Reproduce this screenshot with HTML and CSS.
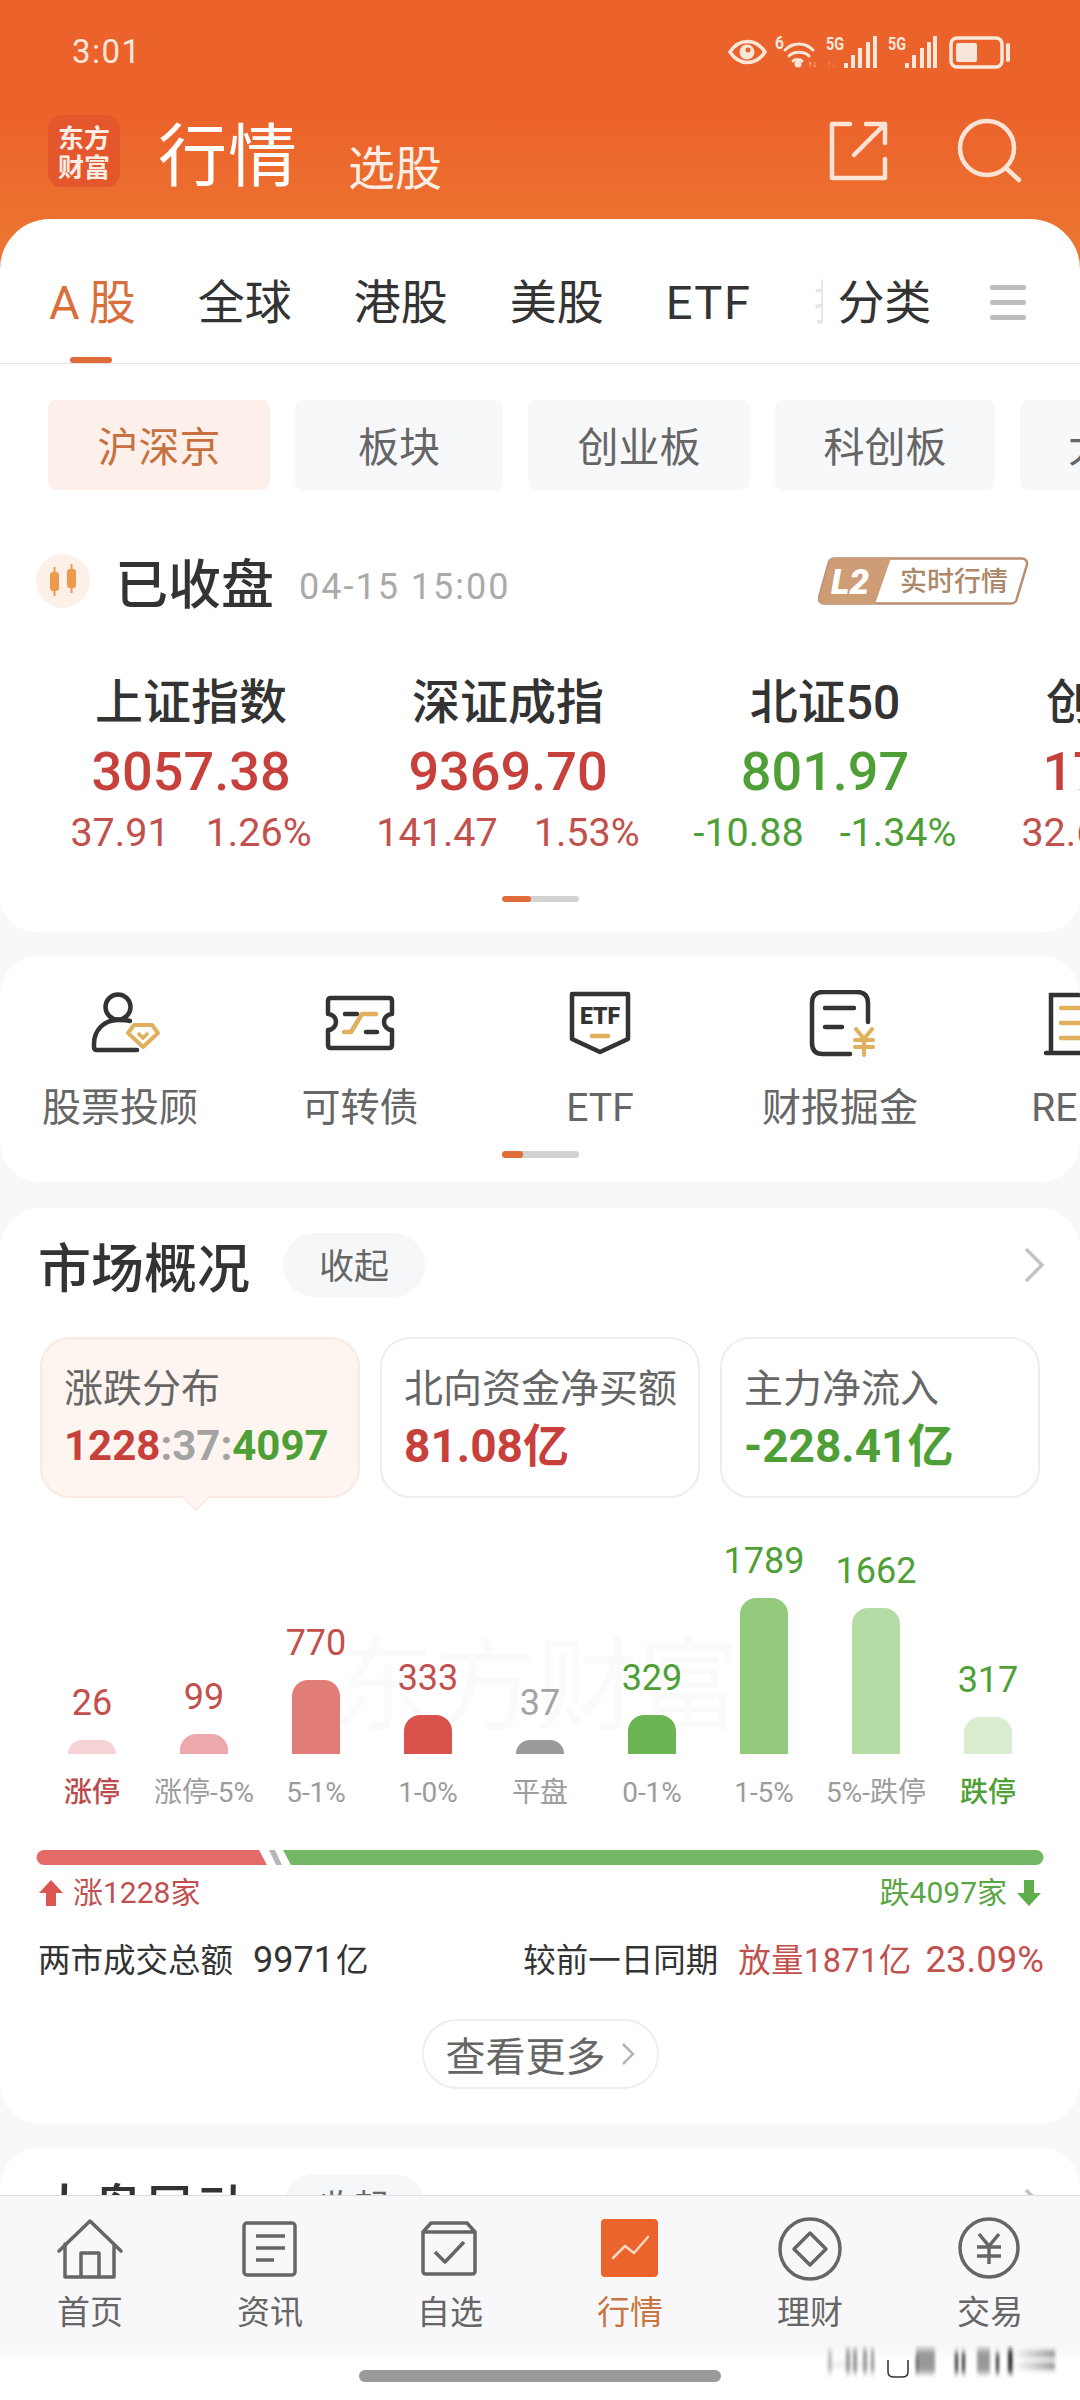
FILE: index.html
```html
<!DOCTYPE html>
<html lang="zh-CN">
<head>
<meta charset="utf-8">
<title>行情</title>
<link rel="stylesheet" href="styles.css">
</head>
<body>
<div class="app">
  <header class="header">
    <div class="status">
      <span class="time">3:01</span>
      <svg class="status-icons" viewBox="720 30 300 40" width="300" height="40">
        <g fill="none" stroke="#FBE7DA" stroke-width="3.5" stroke-linecap="round">
          <path d="M730 52c9-14 26-14 35 0c-9 14-26 14-35 0z"/>
          <path d="M785 50c8-8 20-8 28 0M789 56c5-5 15-5 20 0M793 61c2-2 7-2 9 0" stroke-width="3"/>
          <rect x="951" y="38" width="51" height="29" rx="6"/>
          <path d="M1008 45v15" stroke-width="4"/>
        </g>
        <circle cx="747" cy="52" r="7.5" fill="#FBE7DA"/>
        <circle cx="748" cy="50" r="2.5" fill="#EB622B"/>
        <circle cx="798" cy="64" r="3.5" fill="#FBE7DA"/>
        <rect x="956" y="43" width="21" height="19" rx="2" fill="#FBE7DA"/>
        <g fill="#FBE7DA">
          <rect x="844" y="63" width="4" height="5"/><rect x="851" y="55" width="4" height="13"/><rect x="858" y="48" width="4" height="20"/><rect x="866" y="42" width="4" height="26"/><rect x="873" y="36" width="4" height="32"/>
          <rect x="905" y="63" width="4" height="5"/><rect x="912" y="55" width="4" height="13"/><rect x="920" y="48" width="4" height="20"/><rect x="927" y="42" width="4" height="26"/><rect x="933" y="36" width="4" height="32"/>
          <text class="st" x="775" y="49" textLength="9" lengthAdjust="spacingAndGlyphs">6</text>
          <text class="st" x="826" y="50" textLength="18" lengthAdjust="spacingAndGlyphs">5G</text>
          <text class="st" x="888" y="50" textLength="18" lengthAdjust="spacingAndGlyphs">5G</text>
          <text class="st-sm" x="808" y="67">↑↓</text>
        </g>
        <text class="st-sm dim" x="827" y="67">↑↓</text>
      </svg>
    </div>
    <div class="titlebar">
      <div class="logo"><span>东方</span><span>财富</span></div>
      <h1 class="page-title">行情</h1>
      <span class="page-sub">选股</span>
      <svg class="title-icons" viewBox="825 115 200 72" width="200" height="72">
        <g fill="none" stroke="#FBE3D5" stroke-width="4.5" stroke-linecap="round" stroke-linejoin="round">
          <path d="M850 124h-18v54h53v-19"/>
          <path d="M854 155l31-31M866 124h19v19"/>
          <circle cx="987" cy="148" r="27"/>
          <path d="M1006 168l13 12"/>
        </g>
      </svg>
    </div>
  </header>

  <section class="panel">
    <nav class="tabs">
      <span class="tab active"><span class="tab-a">A</span>股</span>
      <span class="tab">全球</span>
      <span class="tab">港股</span>
      <span class="tab">美股</span>
      <span class="tab tab-etf">ETF</span>
      <span class="tab tab-ghost">换</span>
      <span class="tab tab-last">分类</span>
      <span class="menu"><i></i><i></i><i></i></span>
    </nav>
    <div class="pills">
      <span class="pill pill-on w222">沪深京</span>
      <span class="pill w208">板块</span>
      <span class="pill w222">创业板</span>
      <span class="pill w220">科创板</span>
      <span class="pill pill-cut">大盘</span>
    </div>
    <div class="closed">
      <span class="closed-ico">
        <svg viewBox="0 0 54 54" width="54" height="54"><g fill="#EE9A4D"><rect x="14" y="18" width="9" height="19" rx="3"/><rect x="31" y="15" width="9" height="19" rx="3"/><rect x="17.500" y="13" width="2" height="29"/><rect x="34.500" y="10" width="2" height="29"/></g></svg>
      </span>
      <span class="closed-title">已收盘</span>
      <span class="closed-date">04-15 15:00</span>
      <svg class="l2" viewBox="0 0 212 48" width="212" height="48">
        <path d="M16 1.500H204a5 5 0 0 1 5 6L199 41a6 6 0 0 1-6 5.500H6a5 5 0 0 1-5-6L11 5a6 6 0 0 1 5-3.500z" fill="#fff" stroke="#B98F70" stroke-width="2.500"/>
        <path d="M16 1H73L57 47H6a5 5 0 0 1-5-6L11 5a6 6 0 0 1 5-4z" fill="#CE9D76"/>
        <text class="l2-big" x="13" y="37">L2</text>
        <text class="l2-txt" x="82" y="34">实时行情</text>
      </svg>
    </div>
    <div class="indices">
      <div class="idx">
        <div class="idx-name">上证指数</div>
        <div class="idx-val up">3057.38</div>
        <div class="idx-chg up-l"><span>37.91</span><span>1.26%</span></div>
      </div>
      <div class="idx">
        <div class="idx-name">深证成指</div>
        <div class="idx-val up">9369.70</div>
        <div class="idx-chg up-l"><span>141.47</span><span>1.53%</span></div>
      </div>
      <div class="idx">
        <div class="idx-name">北证50</div>
        <div class="idx-val down">801.97</div>
        <div class="idx-chg down"><span>-10.88</span><span>-1.34%</span></div>
      </div>
      <div class="idx">
        <div class="idx-name">创业板指</div>
        <div class="idx-val up">1756.25</div>
        <div class="idx-chg up-l"><span>32.61</span><span>1.89%</span></div>
      </div>
    </div>
    <div class="scroller"><i class="s29"></i></div>
  </section>

  <section class="card card-tools">
    <div class="tools">
      <div class="tool">
        <svg class="tool-ico" viewBox="60 990 120 70" width="120" height="70">
          <g fill="none" stroke="#333" stroke-width="4.500" stroke-linecap="round" stroke-linejoin="round">
            <circle cx="118" cy="1007" r="12.500"/>
            <path d="M130 1021c-4-1-8-1-12-1c-14 0-24 10-24 24v3q0 3 3 3h40"/>
          </g>
          <path d="M134 1025h18l6 8l-15 14l-15-14z" fill="#fff" stroke="#E1B05C" stroke-width="4" stroke-linejoin="round"/>
          <path d="M138 1033l5 5l5-5" fill="none" stroke="#E1B05C" stroke-width="3.500"/>
        </svg>
        <span class="tool-label">股票投顾</span>
      </div>
      <div class="tool">
        <svg class="tool-ico" viewBox="300 990 120 70" width="120" height="70">
          <path d="M331 998h58q3 0 3 3v13a8 8 0 0 0 0 16v15q0 3-3 3h-58q-3 0-3-3v-15a8 8 0 0 0 0-16v-13q0-3 3-3z" fill="none" stroke="#333" stroke-width="4.500" stroke-linejoin="round"/>
          <path d="M345 1014h12M366 1032h11" stroke="#333" stroke-width="4.500" stroke-linecap="round"/>
          <path d="M344 1032h7l11-18h14" fill="none" stroke="#E1B05C" stroke-width="4.500" stroke-linecap="round" stroke-linejoin="round"/>
        </svg>
        <span class="tool-label">可转债</span>
      </div>
      <div class="tool">
        <svg class="tool-ico" viewBox="540 990 120 70" width="120" height="70">
          <path d="M572 994h56v45l-28 13l-28-13z" fill="none" stroke="#333" stroke-width="4.500" stroke-linejoin="round"/>
          <text class="etf-glyph" x="600" y="1024">ETF</text>
          <path d="M592 1036h16" stroke="#E1B05C" stroke-width="4.500" stroke-linecap="round"/>
        </svg>
        <span class="tool-label">ETF</span>
      </div>
      <div class="tool">
        <svg class="tool-ico" viewBox="780 990 120 70" width="120" height="70">
          <path d="M868 1022v-19q0-11-11-11h-34q-11 0-11 11v40q0 11 11 11h27M825 1008h29M825 1027h17" fill="none" stroke="#333" stroke-width="4.500" stroke-linecap="round"/>
          <path d="M856 1029l8 10l8-10M855 1040h18M855 1047h18M864 1039v16" fill="none" stroke="#E1B05C" stroke-width="4" stroke-linecap="round" stroke-linejoin="round"/>
        </svg>
        <span class="tool-label">财报掘金</span>
      </div>
      <div class="tool">
        <svg class="tool-ico" viewBox="1020 990 120 70" width="120" height="70">
          <path d="M1110 995h-59v57M1046 1053h70" fill="none" stroke="#333" stroke-width="4.500" stroke-linecap="round"/>
          <path d="M1061 1008h50M1061 1023h50M1061 1038h50" stroke="#E1B05C" stroke-width="4.500" stroke-linecap="round"/>
        </svg>
        <span class="tool-label">REITs</span>
      </div>
    </div>
    <div class="scroller tools-scroller"><i class="s21"></i></div>
  </section>

  <section class="card card-market">
    <div class="sec-head">
      <h2 class="sec-title">市场概况</h2>
      <span class="fold">收起</span>
      <svg class="chev" viewBox="0 0 22 36" width="22" height="36"><path d="M3 2l16 16L3 34" fill="none" stroke="#C4C4C4" stroke-width="3.500"/></svg>
    </div>
    <div class="stats">
      <div class="stat stat-on">
        <div class="stat-label">涨跌分布</div>
        <div class="stat-val"><span class="up">1228</span><span class="flat">:37:</span><span class="down">4097</span></div>
      </div>
      <div class="stat">
        <div class="stat-label">北向资金净买额</div>
        <div class="stat-val stat-big up">81.08亿</div>
      </div>
      <div class="stat">
        <div class="stat-label">主力净流入</div>
        <div class="stat-val stat-big down">-228.41亿</div>
      </div>
    </div>
    <div class="chart">
      <div class="watermark">东方财富</div>
      <div class="col"><span class="num up-l">26</span><i class="bar c1" style="height:14px"></i></div>
      <div class="col"><span class="num up-l">99</span><i class="bar c2" style="height:20px"></i></div>
      <div class="col"><span class="num up-l">770</span><i class="bar c3" style="height:74px"></i></div>
      <div class="col"><span class="num up-l">333</span><i class="bar c4" style="height:39px"></i></div>
      <div class="col"><span class="num flat">37</span><i class="bar c5" style="height:14px"></i></div>
      <div class="col"><span class="num down">329</span><i class="bar c6" style="height:39px"></i></div>
      <div class="col"><span class="num down">1789</span><i class="bar c7" style="height:156px"></i></div>
      <div class="col"><span class="num down">1662</span><i class="bar c8" style="height:146px"></i></div>
      <div class="col"><span class="num down">317</span><i class="bar c9" style="height:37px"></i></div>
    </div>
    <div class="axis">
      <span class="ax-up">涨停</span><span>涨停-5%</span><span>5-1%</span><span>1-0%</span><span>平盘</span><span>0-1%</span><span>1-5%</span><span>5%-跌停</span><span class="ax-down">跌停</span>
    </div>
    <svg class="ratio" viewBox="36 0 1008 15" width="1008" height="15">
      <path d="M44 0H259L267 15H44A7.500 7.500 0 0 1 44 0z" fill="#E46B68"/>
      <path d="M269 0H275L282 15H276z" fill="#B8B8B8"/>
      <path d="M283 0H1036A7.500 7.500 0 0 1 1036 15H291z" fill="#74B866"/>
    </svg>
    <div class="ratio-text">
      <span class="rise"><svg viewBox="0 0 26 28" width="26" height="28"><path d="M13 1L25 14H18V27H8V14H1z" fill="#DB5650"/></svg>涨1228家</span>
      <span class="fall">跌4097家<svg viewBox="0 0 26 28" width="26" height="28"><path d="M13 27L25 14H18V1H8V14H1z" fill="#5FAE4B"/></svg></span>
    </div>
    <div class="turnover">
      <span>两市成交总额<b class="tv-num">9971</b><b class="tv-unit">亿</b></span>
      <span>较前一日同期<b class="tv-up tv-vol">放量1871亿</b><b class="tv-up tv-pct">23.09%</b></span>
    </div>
    <div class="more-wrap">
      <span class="more">查看更多<svg viewBox="0 0 14 24" width="14" height="24"><path d="M2 2l10 10L2 22" fill="none" stroke="#B5B5B5" stroke-width="2.500"/></svg></span>
    </div>
  </section>

  <section class="card card-next">
    <div class="sec-head">
      <h2 class="sec-title">大盘异动</h2>
      <span class="fold">收起</span>
      <svg class="chev" viewBox="0 0 22 36" width="22" height="36"><path d="M3 2l16 16L3 34" fill="none" stroke="#C4C4C4" stroke-width="3.500"/></svg>
    </div>
  </section>

  <footer class="tabbar">
    <div class="tabbar-row">
      <div class="nav-item">
        <svg viewBox="50 2215 80 70" width="80" height="70"><path d="M59 2251l31-30l31 30M65 2244v33h49v-33M81 2277v-24h18v24" fill="none" stroke="#666" stroke-width="3.500" stroke-linecap="round" stroke-linejoin="round"/></svg>
        <span>首页</span>
      </div>
      <div class="nav-item">
        <svg viewBox="230 2215 80 70" width="80" height="70"><rect x="244" y="2223" width="51" height="52" rx="3" fill="none" stroke="#666" stroke-width="3.500"/><path d="M256 2236h29M256 2248h29M256 2260h18" stroke="#666" stroke-width="3.500"/></svg>
        <span>资讯</span>
      </div>
      <div class="nav-item">
        <svg viewBox="410 2215 80 70" width="80" height="70"><path d="M423 2232l8-9h36l8 9v39q0 3-3 3h-46q-3 0-3-3zM423 2232h52M435 2252l10 10l19-20" fill="none" stroke="#666" stroke-width="3.500" stroke-linejoin="round"/></svg>
        <span>自选</span>
      </div>
      <div class="nav-item nav-on">
        <svg viewBox="590 2215 80 70" width="80" height="70"><rect x="601" y="2219" width="57" height="58" rx="4" fill="#EB642B"/><path d="M613 2258l12-12l9 7l14-16" fill="none" stroke="#FBD9C3" stroke-width="2.500" stroke-linecap="round" stroke-linejoin="round"/></svg>
        <span>行情</span>
      </div>
      <div class="nav-item">
        <svg viewBox="770 2215 80 70" width="80" height="70"><circle cx="810" cy="2249" r="30" fill="none" stroke="#666" stroke-width="3.500"/><path d="M810 2233l16 16l-16 16l-16-16z" fill="none" stroke="#666" stroke-width="3.500" stroke-linejoin="round"/></svg>
        <span>理财</span>
      </div>
      <div class="nav-item">
        <svg viewBox="950 2215 80 70" width="80" height="70"><circle cx="989" cy="2248" r="29" fill="none" stroke="#666" stroke-width="3.500"/><path d="M979 2234l10 12l10-12M977 2247h24M977 2256h24M989 2246v18" fill="none" stroke="#666" stroke-width="3.500"/></svg>
        <span>交易</span>
      </div>
    </div>
    <div class="home-pill"></div>
    <svg class="smudge" viewBox="825 2345 232 34" width="232" height="34">
      <defs>
        <filter id="soft" x="-5%" y="-20%" width="110%" height="140%"><feGaussianBlur stdDeviation="1.600 3"/></filter>
        <linearGradient id="fadeBar"><stop offset="0" stop-color="#fff"/><stop offset="1" stop-color="#333"/></linearGradient>
      </defs>
      <g filter="url(#soft)">
        <path d="M826 2365h50" stroke="#bbb" stroke-width="1.500"/>
        <g fill="#999">
          <rect x="828" y="2350" width="4" height="23" opacity=".6"/><rect x="846" y="2349" width="4" height="24"/><rect x="853" y="2349" width="4" height="24"/><rect x="863" y="2349" width="4" height="24"/><rect x="871" y="2349" width="3" height="24"/>
          <rect x="916" y="2349" width="19" height="24"/>
          <rect x="977" y="2349" width="13" height="24"/>
        </g>
        <g fill="#333">
          <rect x="955" y="2352" width="3" height="21"/><rect x="962" y="2352" width="3" height="21"/><rect x="996" y="2353" width="3" height="20"/><rect x="1008" y="2349" width="5" height="24"/><rect x="916" y="2355" width="2" height="18"/>
        </g>
        <path d="M1013 2354h42M1013 2366h42" stroke="url(#fadeBar)" stroke-width="4"/>
      </g>
      <path d="M888 2360v12q0 5 6 5h8q6 0 6-5v-12" fill="none" stroke="#333" stroke-width="1.500"/>
    </svg>
  </footer>
</div>
</body>
</html>
```
FILE: styles.css
```css
* { box-sizing: border-box; margin: 0; padding: 0; }
html, body { width: 1080px; height: 2400px; overflow: hidden; }
body {
  font-family: Roboto, "Noto Sans CJK SC", sans-serif;
  color: #333;
  background: #f7f8fa;
}
.app {
  position: relative;
  width: 1080px;
  height: 2400px;
  overflow: hidden;
  background: linear-gradient(180deg, #eb622b 0, #eb622b 110px, #ed7b33 290px, #ed7b33 300px) no-repeat;
  background-size: 100% 300px;
  background-color: #f7f8fa;
}
i { display: block; font-style: normal; }

/* header */
.header { height: 219px; color: #fff; }
.status { height: 100px; display: flex; align-items: center; justify-content: space-between; padding: 2px 60px 0 72px; }
.time { font-size: 33px; color: #fbe7da; letter-spacing: 1.5px; }
.status-icons { display: block; margin-top: -2px; }
.st { font: 700 19px Roboto, sans-serif; }
.st-sm { font: 700 9px Roboto, sans-serif; }
.dim { fill: #f29a72; }
.titlebar { height: 119px; display: flex; align-items: flex-start; padding: 15px 55px 0 48px; position: relative; }
.logo {
  width: 72px; height: 72px; border-radius: 14px; background: #e4562b;
  display: flex; flex-direction: column; align-items: center; justify-content: center;
  font: 700 26px/29px "Noto Sans CJK SC", sans-serif; color: #fdeee5;
}
.page-title { font: 400 69px/72px "Noto Sans CJK SC", sans-serif; margin-left: 38px; color: #fff; letter-spacing: 1px; }
.page-sub { font: 400 47px/60px "Noto Sans CJK SC", sans-serif; margin: 20px 0 0 50px; color: #fdeee5; }
.title-icons { margin-left: auto; display: block; }

/* top panel */
.panel { background: #fff; border-radius: 50px 50px 36px 36px; height: 713px; overflow: hidden; }
.tabs { height: 145px; padding: 54px 0 0 49px; display: flex; gap: 62px; border-bottom: 1px solid #e4e4e4; position: relative; }
.tab { font: 400 47px/60px Roboto, "Noto Sans CJK SC", sans-serif; color: #333; position: relative; white-space: nowrap; }
.tab-etf { letter-spacing: 1.5px; }
.tab-a { margin-right: 9px; }
.tab.active { color: #d9703c; }
.tab.active::after { content: ""; position: absolute; left: 21px; width: 42px; height: 6px; bottom: 0; border-radius: 3px; background: #de6b38; }
.tab-ghost { width: 10px; overflow: hidden; color: #e6e6e6; }
.tab-last { margin-left: -48px; }
.menu { margin-left: 0; display: flex; flex-direction: column; gap: 10px; width: 36px; padding-top: 12px; position: absolute; left: 990px; }
.menu i { height: 5px; border-radius: 2px; background: #bdbdbd; }
.pills { display: flex; gap: 25px; padding-left: 48px; margin-top: 36px; height: 90px; overflow: hidden; }
.pill { flex: none; height: 90px; border-radius: 8px; background: #f7f8fa; color: #666; font: 400 41px/88px "Noto Sans CJK SC", sans-serif; text-align: center; }
.w222 { width: 222px; } .w208 { width: 208px; } .w220 { width: 220px; }
.pill-on { background: #fdf0ea; color: #c8703f; }
.pill-cut { width: 200px; text-align: left; padding-left: 48px; }
.closed { display: flex; align-items: center; height: 54px; margin-top: 64px; padding: 0 50px 0 36px; }
.closed-ico { width: 54px; height: 54px; border-radius: 50%; background: #fdf0e8; flex: none; }
.closed-ico svg { display: block; }
.closed-title { margin-left: 25px; font: 500 53px/52px "Noto Sans CJK SC", sans-serif; color: #333; }
.closed-date { margin-left: 25px; font-size: 36px; line-height: 54px; color: #aaa; letter-spacing: 2px; padding-top: 11px; }
.l2 { margin-left: auto; display: block; }
.l2-big { font: italic 900 35px Roboto, sans-serif; fill: #fff; }
.l2-txt { font: 500 27px "Noto Sans CJK SC", sans-serif; fill: #ad8769; }
.indices { display: flex; padding-left: 34px; margin-top: 65px; }
.idx { flex: 0 0 317px; text-align: center; }
.idx-name { font: 500 48px/60px Roboto, "Noto Sans CJK SC", sans-serif; color: #333; margin-left: -3px; }
.idx-val { font-size: 54px; font-weight: 500; line-height: 64px; margin: 7px 0 0 -3px; }
.idx-chg { display: flex; justify-content: center; gap: 36px; font-size: 39.500px; line-height: 48px; margin: 5px 0 0 -3px; white-space: nowrap; }
.up { color: #c8403c; }
.up-l { color: #c2504c; }
.down { color: #4e9f36; }
.flat { color: #a3a3a3; }
.scroller { width: 77px; height: 6px; border-radius: 3px; background: #d2d2d2; margin: 39px auto 0; overflow: hidden; }
.scroller i { height: 100%; background: #de6b38; border-radius: 3px; }
.s29 { width: 29px; } .s21 { width: 21px; }

/* cards */
.card { background: #fff; border-radius: 40px; }
.card-tools { margin-top: 23px; height: 227px; padding-top: 35px; overflow: hidden; }
.tools { display: flex; }
.tool { flex: 0 0 240px; display: flex; flex-direction: column; align-items: center; }
.tool-ico { display: block; }
.tool-label { margin-top: 23px; font: 400 39px/50px Roboto, "Noto Sans CJK SC", sans-serif; color: #666; white-space: nowrap; }
.etf-glyph { font: 900 23px Roboto, sans-serif; fill: #333; text-anchor: middle; }
.tools-scroller { margin-top: 18px; height: 7px; }
.card-market { margin-top: 26px; height: 916px; padding-top: 25px; }
.sec-head { display: flex; align-items: center; height: 64px; padding: 0 35px 0 38px; }
.sec-title { font: 500 53px/62px "Noto Sans CJK SC", sans-serif; color: #333; }
.fold { margin-left: 33px; width: 142px; height: 64px; border-radius: 32px; background: #f5f7f9; color: #666; font: 400 35px/62px "Noto Sans CJK SC", sans-serif; text-align: center; }
.chev { margin-left: auto; display: block; }
.stats { display: flex; gap: 20px; padding: 0 40px; margin-top: 40px; }
.stat { position: relative; width: 320px; height: 161px; border: 2px solid #eee; border-radius: 30px; padding: 21px 0 0 22px; }
.stat-on { background: #fef4f0; border-color: #fae9e2; }
.stat-on::after {
  content: ""; position: absolute; left: 139px; bottom: -15px; width: 28px; height: 28px;
  background: #fef4f0; border: solid #fae9e2; border-width: 0 2px 2px 0; transform: rotate(45deg) scale(.72);
}
.stat-label { font: 400 39px/50px "Noto Sans CJK SC", sans-serif; color: #666; white-space: nowrap; }
.stat-val { margin-top: 11px; font: 700 42px/50px Roboto, "Noto Sans CJK SC", sans-serif; white-space: nowrap; }
.stat-big { font-size: 46px; }
.chart { position: relative; display: grid; grid-template-columns: repeat(9, 112px); height: 224px; margin: 32px 0 0 36px; align-items: end; }
.watermark { position: absolute; left: 296px; top: 90px; font: 400 102px/115px "Noto Sans CJK SC", sans-serif; color: #fafafa; white-space: nowrap; }
.col { position: relative; display: flex; flex-direction: column; align-items: center; justify-content: flex-end; }
.num { font-size: 36px; line-height: 40px; margin-bottom: 17px; white-space: nowrap; }
.bar { width: 48px; border-radius: 16px 16px 0 0; }
.c1 { background: #f5d2d4; } .c2 { background: #eda9ae; } .c3 { background: #e27c77; } .c4 { background: #d9534c; } .c5 { background: #9a9a9a; }
.c6 { background: #6bb552; } .c7 { background: #93ca7c; } .c8 { background: #b6dca6; } .c9 { background: #d9ecd0; }
.axis { display: grid; grid-template-columns: repeat(9, 112px); margin: 21px 0 0 36px; font-size: 28px; line-height: 36px; color: #9c9c9c; text-align: center; white-space: nowrap; }
.axis span { display: block; }
.ax-up { color: #bd4a4a; font-weight: 500; }
.ax-down { color: #4e9f36; font-weight: 500; }
.ratio { display: block; margin: 39px 0 0 36px; }
.ratio-text { display: flex; justify-content: space-between; margin-top: 8px; padding: 0 38px; font-size: 30px; line-height: 40px; }
.ratio-text span { display: flex; align-items: center; gap: 9px; }
.rise { color: #c14f4f; }
.fall { color: #5aa545; }
.turnover { display: flex; justify-content: space-between; margin-top: 25px; padding: 0 36px 0 38px; font-size: 32.500px; line-height: 44px; color: #333; white-space: nowrap; }
.turnover b { font-weight: 400; }
.tv-num { margin-left: 20px; font-size: 36px; }
.tv-unit { margin-left: 2px; }
.tv-up { color: #c2504c; margin-left: 20px; }
.tv-vol { letter-spacing: .4px; }
.tv-pct { font-size: 36.500px; margin-left: 14px; }
.more-wrap { display: flex; justify-content: center; margin-top: 36px; }
.more { display: flex; align-items: center; gap: 15px; justify-content: center; width: 237px; height: 70px; border: 2px solid #eee; border-radius: 35px; font: 400 40px/66px "Noto Sans CJK SC", sans-serif; color: #666; }
.card-next { margin-top: 23px; height: 200px; padding-top: 27px; }

/* bottom bar */
.tabbar {
  position: absolute; left: 0; right: 0; bottom: 0; height: 205px;
  border-top: 1px solid #dedede;
  background: linear-gradient(180deg, #f8f8fa 0, #f8f8fa 150px, #fff 168px);
}
.tabbar-row { display: grid; grid-template-columns: repeat(6, 180px); padding-top: 19px; }
.nav-item { display: flex; flex-direction: column; align-items: center; font: 400 33px/44px "Noto Sans CJK SC", sans-serif; color: #666; }
.nav-item svg { display: block; margin-bottom: 3px; }
.nav-on { color: #c9753f; }
.home-pill { width: 362px; height: 12px; border-radius: 6px; background: #9a9a9a; margin: 38px auto 0; }
.smudge { position: absolute; left: 825px; top: 149px; display: block; }
```
